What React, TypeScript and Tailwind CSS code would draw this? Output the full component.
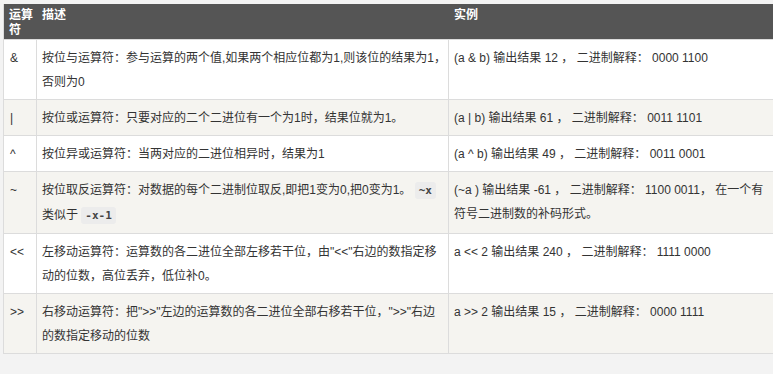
import React from 'react';

type Row = {
  op: string;
  desc: React.ReactNode;
  example: React.ReactNode;
};

function Code({ children }: { children: React.ReactNode }) {
  return (
    <code className="rounded-[3px] bg-[#ececec] px-[4px] py-[2px] font-['DejaVu_Sans_Mono',monospace] text-[11px] font-bold text-[#444]">
      {children}
    </code>
  );
}

const rows: Row[] = [
  {
    op: '&',
    desc: (
      <>
        按位与运算符：参与运算的两个值,如果两个相应位都为1,则该位的结果为1，
        <br />
        否则为0
      </>
    ),
    example: '(a & b) 输出结果 12 ， 二进制解释： 0000 1100',
  },
  {
    op: '|',
    desc: '按位或运算符：只要对应的二个二进位有一个为1时，结果位就为1。',
    example: '(a | b) 输出结果 61 ， 二进制解释： 0011 1101',
  },
  {
    op: '^',
    desc: '按位异或运算符：当两对应的二进位相异时，结果为1',
    example: '(a ^ b) 输出结果 49 ， 二进制解释： 0011 0001',
  },
  {
    op: '~',
    desc: (
      <>
        按位取反运算符：对数据的每个二进制位取反,即把1变为0,把0变为1。 <Code>~x</Code>
        <br />
        类似于 <Code>-x-1</Code>
      </>
    ),
    example: (
      <>
        (~a ) 输出结果 -61 ， 二进制解释： 1100 0011， 在一个有
        <br />
        符号二进制数的补码形式。
      </>
    ),
  },
  {
    op: '<<',
    desc: (
      <>
        左移动运算符：运算数的各二进位全部左移若干位，由"&lt;&lt;"右边的数指定移
        <br />
        动的位数，高位丢弃，低位补0。
      </>
    ),
    example: 'a << 2 输出结果 240 ， 二进制解释： 1111 0000',
  },
  {
    op: '>>',
    desc: (
      <>
        右移动运算符：把"&gt;&gt;"左边的运算数的各二进位全部右移若干位，"&gt;&gt;"右边
        <br />
        的数指定移动的位数
      </>
    ),
    example: 'a >> 2 输出结果 15 ， 二进制解释： 0000 1111',
  },
];

export default function App() {
  return (
    <div className="h-[374px] w-[773px] overflow-hidden bg-[#f3f3f3] pl-[3px] pt-[4px] font-['Liberation_Sans','Noto_Sans_CJK_SC',sans-serif] text-[12px] text-[#333]">
      <div className="border-b border-l border-[#dcdcdc]">
        {/* Header */}
        <div className="grid grid-cols-[33px_412px_1fr] bg-[#555555] font-bold leading-[15px] text-white">
          <div className="h-[35px] pl-[5px] pr-[3px] pt-[4px]">运算符</div>
          <div className="pl-[5px] pt-[4px]">描述</div>
          <div className="pl-[5px] pt-[4px]">实例</div>
        </div>

        {rows.map((row, i) => (
          <div
            key={row.op}
            className={`grid grid-cols-[33px_412px_1fr] border-t border-[#dcdcdc] leading-[24px] ${
              i % 2 === 1 ? 'bg-[#f5f4f0]' : 'bg-white'
            }`}
          >
            <div className="border-r border-[#dcdcdc] pb-[5px] pl-[6px] pt-[6px]">{row.op}</div>
            <div className="overflow-hidden whitespace-nowrap border-r border-[#dcdcdc] pb-[5px] pl-[5px] pt-[6px]">
              {row.desc}
            </div>
            <div className="overflow-hidden whitespace-nowrap pb-[5px] pl-[5px] pt-[6px]">{row.example}</div>
          </div>
        ))}
      </div>
    </div>
  );
}
